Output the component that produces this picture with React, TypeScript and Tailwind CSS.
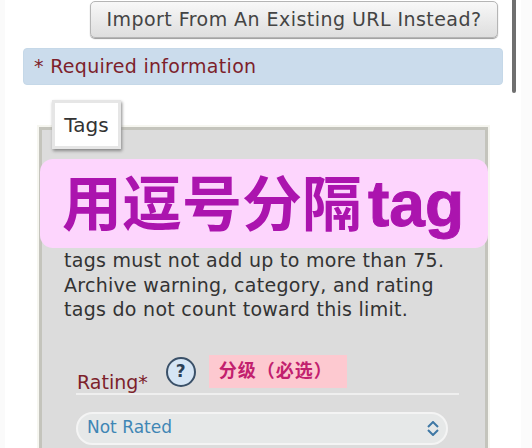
const sans = "font-['DejaVu_Sans','Noto_Sans_CJK_SC',sans-serif]"

export default function App() {
  return (
    <div className={`relative h-[448px] w-[532px] overflow-hidden bg-white ${sans}`}>
      {/* page edges */}
      <div className="absolute inset-y-0 left-0 w-[5px] bg-[#fafafa]" />
      <div className="absolute inset-y-0 right-0 w-[11px] bg-[#fbfbfb]" />
      {/* scrollbar */}
      <div className="absolute left-[512px] top-0 h-[93px] w-[4px] rounded-b-full bg-[#6f6f6f]" />

      <div className="relative flex flex-col pl-[23px] pr-[29px] pt-px">
        <div className="flex justify-end pr-[5px]">
          <button className="flex h-[37px] w-[408px] items-center justify-center rounded-[5px] border border-[#b5b5b5] bg-gradient-to-b from-[#f8f8f8] to-[#dedede] text-[19px] tracking-[0.45px] text-[#444] shadow-[0_1px_1px_#999]">
            Import From An Existing URL Instead?
          </button>
        </div>

        <div className="mt-[10px] flex h-[37px] items-center rounded-[4px] border border-[#c5d8e8] bg-[#cbdcec] pl-[10px] text-[19px] tracking-[0.3px] text-[#7d1f2b]">
          * Required information
        </div>

        <div className="relative ml-[16px] mr-[15px] mt-[42px] h-[400px] border-[3px] border-[#c4c4bc] bg-[#dcdcdc] pl-[22px] shadow-[0_0_0_2px_#f6f6f0]">
          <div className="absolute left-[10px] top-[-30px] flex h-[49px] w-[69px] items-center justify-center border-[3px] border-[#e6e6e6] bg-white text-[20px] text-[#333] shadow-[1px_2px_3px_#888]">
            Tags
          </div>

          <p className="pt-[118px] text-[19px] leading-[24.5px] tracking-[0.28px] text-[#333]">
            tags must not add up to more than 75.
            <br />
            Archive warning, category, and rating
            <br />
            tags do not count toward this limit.
          </p>

          <div className="ml-[12px] mt-[27px] flex h-[46px] w-[383px] items-end border-b-2 border-[#efefef] pl-px">
            <span className="relative top-px text-[19px] leading-[24px] text-[#7d1f2b]">Rating*</span>
            <span className="relative bottom-[6px] ml-[18px] flex h-[30px] w-[30px] items-center justify-center rounded-full border-2 border-[#3a5068] bg-[#d5e5f5] text-[17px] font-bold text-[#2a4058]">
              ?
            </span>
            <span className="relative bottom-[5px] ml-[13px] flex h-[33px] w-[138px] items-center bg-[#fdc9d0] pl-[10px] text-[18px] font-bold leading-none tracking-[1px] text-[#c2206e]">
              分级（必选）
            </span>
          </div>

          <div className="ml-[12px] mt-[17px] flex h-[33px] w-[372px] items-center justify-between rounded-full border-2 border-[#f4f4f4] bg-[#e6e8e8] pl-[9px] pr-[7px] text-[17px] text-[#3f86b5]">
            Not Rated
            <svg width="12" height="15" viewBox="0 0 12 15" fill="none" stroke="#3f78a5" strokeWidth="2">
              <polyline points="1,6 6,1 11,6" />
              <polyline points="1,9 6,14 11,9" />
            </svg>
          </div>
        </div>
      </div>

      {/* pink caption pasted over the screenshot */}
      <div className="absolute left-[40px] top-[159px] flex h-[89px] w-[448px] items-center rounded-[13px] bg-[#fdd5fd] pl-[22px] font-['Liberation_Sans','Noto_Sans_CJK_SC',sans-serif] text-[60px] font-bold leading-none text-[#ab14ae]">
        <div className="whitespace-nowrap">
          用逗号分隔<span className="ml-[6px] text-[64px] [-webkit-text-stroke:1px_#ab14ae]">tag</span>
        </div>
      </div>
    </div>
  )
}
